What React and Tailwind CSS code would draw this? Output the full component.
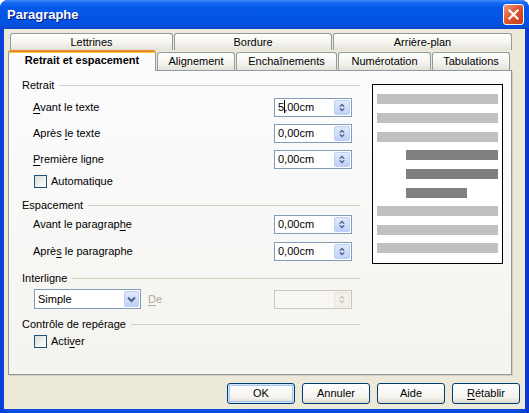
import clsx from 'clsx'

function Mn({ children }) {
  return <span className="underline decoration-1 underline-offset-[2px]">{children}</span>
}

function SpinArrows({ color }) {
  return (
    <svg width="16" height="15" viewBox="0 0 16 15">
      <path d="M5.5 6.5 L8 4 L10.5 6.5" fill="none" stroke={color} strokeWidth="1.6" />
      <path d="M5.5 8.5 L8 11 L10.5 8.5" fill="none" stroke={color} strokeWidth="1.6" />
    </svg>
  )
}

function SpinField({ children, disabled }) {
  return (
    <div
      className={clsx(
        'mr-[8px] flex h-[19px] w-[78px] items-center border',
        disabled ? 'border-[#c9c7ba] bg-[#f7f6f1]' : 'border-[#7f9db9] bg-white'
      )}
    >
      <div className="relative flex-1 pl-[3px] leading-none">{children}</div>
      <div
        className={clsx(
          'mr-px flex h-[15px] w-[16px] items-center justify-center rounded-[2px] border',
          disabled
            ? 'border-[#e6e4dc] bg-[#f1f0ea]'
            : 'border-[#bccff7] bg-[linear-gradient(to_bottom,#e2e9fd,#bfd0f8)]'
        )}
      >
        <SpinArrows color={disabled ? '#c9c7ba' : '#4d6185'} />
      </div>
    </div>
  )
}

function Group({ title, className }) {
  return (
    <div className={clsx('flex h-[14px] items-center', className)}>
      <span>{title}</span>
      <div className="ml-[5px] h-px flex-1 bg-[#d0d0bf]" />
    </div>
  )
}

function FieldRow({ label, value, className }) {
  return (
    <div className={clsx('flex h-[19px] items-center', className)}>
      <div className="flex-1 pl-[11px]">{label}</div>
      <SpinField>{value}</SpinField>
    </div>
  )
}

function Check({ label, className }) {
  return (
    <div className={clsx('flex h-[13px] items-center pl-[12px]', className)}>
      <div className="h-[13px] w-[13px] border border-[#1c5180] bg-[linear-gradient(135deg,#dcdcd7,#ffffff)]" />
      <span className="ml-[4px]">{label}</span>
    </div>
  )
}

function Button({ children, primary }) {
  return (
    <div
      className={clsx(
        'flex h-[21px] w-[68px] items-center justify-center rounded-[3px] border border-[#003c74] bg-[linear-gradient(to_bottom,#ffffff,#f4f3ee_70%,#dcd8cc)]',
        primary && 'shadow-[inset_0_0_0_1px_#cee7ff,inset_0_0_0_2px_#a9c6f2]'
      )}
    >
      {children}
    </div>
  )
}

const tabBase =
  'flex items-center justify-center rounded-t-[3px] border border-b-0 border-[#919b9c] bg-[linear-gradient(to_bottom,#ffffff,#f3f2ed_60%,#e4e2d8)]'

// top, left offset and width of each preview bar
const bars = [
  'mt-0 w-[121px] bg-[#c0c0c0]',
  'mt-[9px] w-[121px] bg-[#c0c0c0]',
  'mt-[9px] w-[121px] bg-[#c0c0c0]',
  'mt-[8px] ml-[29px] w-[92px] bg-[#808080]',
  'mt-[9px] ml-[29px] w-[92px] bg-[#808080]',
  'mt-[9px] ml-[29px] w-[61px] bg-[#808080]',
  'mt-[8px] w-[121px] bg-[#c0c0c0]',
  'mt-[9px] w-[121px] bg-[#c0c0c0]',
  'mt-[8px] w-[121px] bg-[#c0c0c0]',
]

export default function App() {
  return (
    <div className="h-[413px] w-[529px] bg-white font-['Liberation_Sans',Arial,sans-serif] text-[11px] text-black">
      <div className="flex h-full w-full flex-col overflow-hidden rounded-t-[8px] bg-[linear-gradient(to_right,#0a3ed6,#0c4ce0_2%,#0a4ade_98%,#0834cc)]">
        {/* title bar */}
        <div className="flex h-[29px] items-center bg-[linear-gradient(to_bottom,#3d8ef9_0%,#1568f0_10%,#0559e8_25%,#0454e4_60%,#0352df_85%,#0a46d0_100%)] pl-[7px] pr-[5px]">
          <span className="flex-1 pt-[1px] text-[13px] font-bold text-white [text-shadow:1px_1px_0_#0a1883]">
            Paragraphe
          </span>
          <div className="flex h-[21px] w-[21px] items-center justify-center rounded-[3px] border border-white bg-[linear-gradient(135deg,#ec9a80,#dd5a36_45%,#c23a14)]">
            <svg width="13" height="13" viewBox="0 0 13 13">
              <path d="M2.5 2.5 L10.5 10.5 M10.5 2.5 L2.5 10.5" stroke="white" strokeWidth="2.2" strokeLinecap="square" />
            </svg>
          </div>
        </div>

        {/* body */}
        <div className="mx-[4px] mb-[4px] flex flex-1 flex-col bg-[#ece9d8] pt-[4px]">
          {/* back tab row */}
          <div className="flex h-[17px] gap-[1px] pl-[6px]">
            <div className={clsx(tabBase, 'w-[163px]')}>Lettrines</div>
            <div className={clsx(tabBase, 'w-[158px]')}>Bordure</div>
            <div className={clsx(tabBase, 'w-[179px]')}>Arrière-plan</div>
          </div>
          {/* front tab row */}
          <div className="relative z-10 -mb-px flex h-[21px] items-start gap-[1px] pl-[4px]">
            <div className="flex h-[21px] w-[148px] items-center justify-center rounded-t-[3px] border border-b-0 border-[#919b9c] border-t-2 border-t-[#e68b2c] bg-[#fcfcfe] pb-[2px] font-bold shadow-[inset_0_1px_0_#ffc83c]">
              Retrait et espacement
            </div>
            <div className={clsx(tabBase, 'mt-[2px] h-[18px] w-[78px]')}>Alignement</div>
            <div className={clsx(tabBase, 'mt-[2px] h-[18px] w-[101px]')}>Enchaînements</div>
            <div className={clsx(tabBase, 'mt-[2px] h-[18px] w-[93px]')}>Numérotation</div>
            <div className={clsx(tabBase, 'mt-[2px] h-[18px] w-[78px]')}>Tabulations</div>
          </div>

          {/* tab panel */}
          <div className="ml-[4px] flex h-[305px] w-[504px] border border-[#919b9c] bg-[linear-gradient(to_bottom,#fcfcfe,#f4f3ee)] shadow-[1px_1px_0_#d0cebf]">
            <div className="ml-[13px] flex w-[338px] flex-col pt-[7px]">
              <Group title="Retrait" />
              <FieldRow
                className="mt-[6px]"
                label={<><Mn>A</Mn>vant le texte</>}
                value={
                  <>
                    5
                    <span className="relative">
                      ,
                      <span className="absolute left-0 top-[-1px] h-[13px] w-px bg-black" />
                    </span>
                    00cm
                  </>
                }
              />
              <FieldRow className="mt-[7px]" label={<>Après <Mn>l</Mn>e texte</>} value="0,00cm" />
              <FieldRow className="mt-[7px]" label={<><Mn>P</Mn>remière ligne</>} value="0,00cm" />
              <Check className="mt-[6px]" label="Automatique" />

              <Group className="mt-[10px]" title="Espacement" />
              <FieldRow className="mt-[3px]" label={<>Avant le paragrap<Mn>h</Mn>e</>} value="0,00cm" />
              <FieldRow className="mt-[8px]" label={<>Aprè<Mn>s</Mn> le paragraphe</>} value="0,00cm" />

              <Group className="mt-[10px]" title="Interligne" />
              <div className="mt-[4px] flex h-[20px] items-center pl-[12px]">
                <div className="flex h-[20px] w-[107px] items-center border border-[#7f9db9] bg-white">
                  <span className="flex-1 pl-[3px]">Simple</span>
                  <div className="mr-px flex h-[16px] w-[15px] items-center justify-center rounded-[2px] border border-[#bccff7] bg-[linear-gradient(to_bottom,#e2e9fd,#bfd0f8)]">
                    <svg width="9" height="7" viewBox="0 0 9 7">
                      <path d="M1 1.5 L4.5 5 L8 1.5" fill="none" stroke="#4d6185" strokeWidth="2" />
                    </svg>
                  </div>
                </div>
                <span className="ml-[7px] flex-1 text-[#aca899]">
                  <Mn>D</Mn>e
                </span>
                <div className="flex h-[20px] items-center">
                  <SpinField disabled />
                </div>
              </div>

              <Group className="mt-[8px]" title="Contrôle de repérage" />
              <Check className="mt-[4px]" label={<>Acti<Mn>v</Mn>er</>} />
            </div>

            {/* preview */}
            <div className="ml-[12px] mt-[13px] flex h-[180px] w-[131px] flex-col border border-black bg-white px-[4px] pt-[9px]">
              {bars.map((cls, i) => (
                <div key={i} className={clsx('h-[10px] shrink-0', cls)} />
              ))}
            </div>
          </div>

          {/* buttons */}
          <div className="mt-[8px] flex justify-end gap-[7px] pr-[5px]">
            <Button primary>OK</Button>
            <Button>Annuler</Button>
            <Button>Aide</Button>
            <Button>
              <Mn>R</Mn>établir
            </Button>
          </div>
        </div>
      </div>
    </div>
  )
}
